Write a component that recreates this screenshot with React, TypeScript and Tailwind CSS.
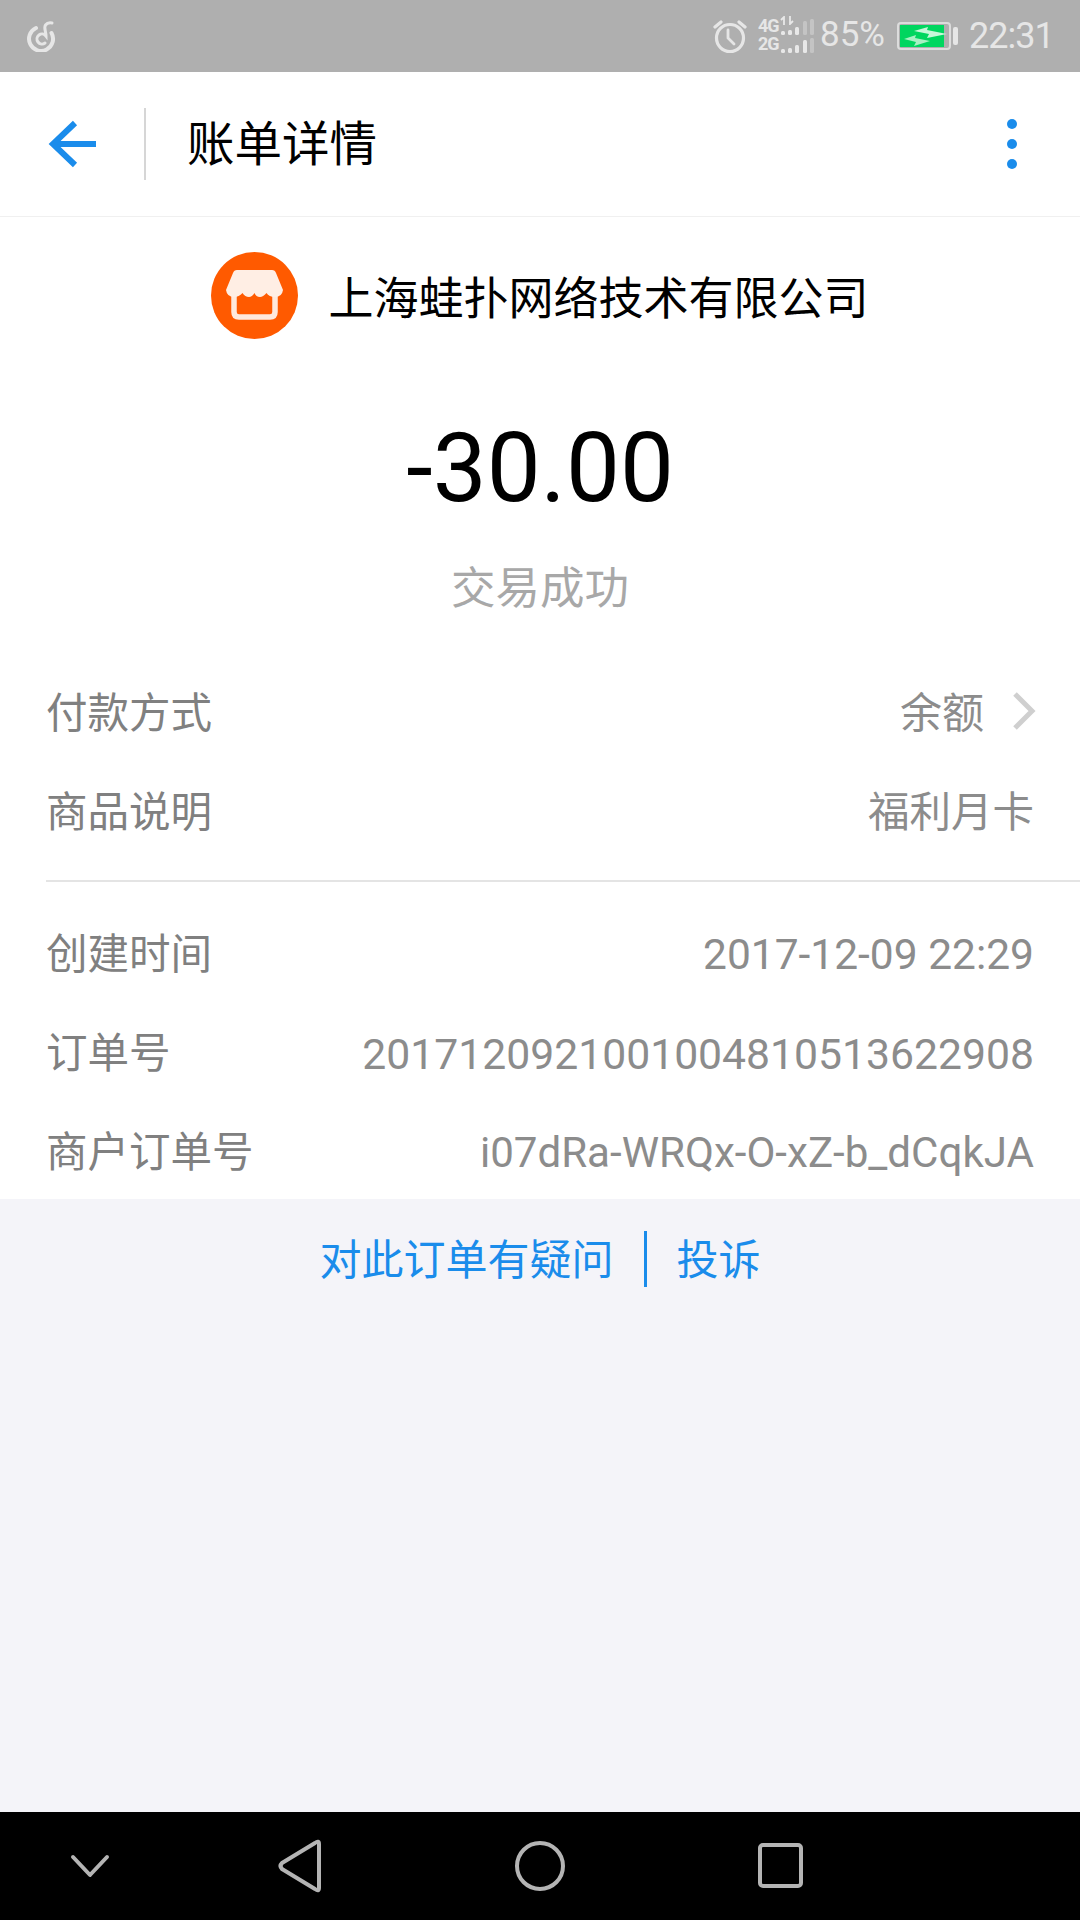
const cjk = "font-['Roboto','Noto_Sans_CJK_SC',sans-serif]";

function Bars({ heights, lit }: { heights: number[]; lit: number }) {
  return (
    <div className="flex items-end gap-[3.300px] h-[16px]">
      {heights.map((h, i) => (
        <div key={i} className={`w-[4px] rounded-[1.500px] ${i < lit ? "bg-[#e8e8e8]" : "bg-[#c4c4c4]"}`} style={{ height: h }} />
      ))}
    </div>
  );
}

function StatusBar() {
  return (
    <div className="h-[72px] bg-[#afafaf] flex items-center justify-between pl-[26px] pr-[27px] text-[#e6e6e6]">
      <svg width="30" height="32" viewBox="0 0 30 32" fill="none" stroke="#e6e6e6" strokeWidth="4" strokeLinecap="round">
        <path d="M10 8 A12 12 0 1 0 25.500 13" />
        <path d="M19 23 A5 5 0 1 1 20 16 C20 11 17.500 8 19.500 5 C21 3 23.500 2.500 26 3" strokeWidth="3" />
      </svg>
      <div className="flex items-center">
        <svg width="34" height="36" viewBox="0 0 34 36" fill="none" stroke="#e6e6e6" strokeWidth="3.200" strokeLinecap="round">
          <circle cx="17" cy="20" r="13.500" />
          <path d="M15 12 V20 L21 26" strokeWidth="2.800" />
          <path d="M2 9 L8 4 M32 9 L26 4" />
        </svg>
        <div className="flex flex-col w-[56px] ml-[11px] -mt-[3px]">
          <div className="flex items-end h-[18px] relative">
            <span className="font-['Roboto',sans-serif] font-bold text-[18px] leading-[18px] w-[23px] tracking-[-1px]">4G</span>
            <Bars heights={[4, 5, 8, 14, 16]} lit={3} />
            <svg width="16" height="9" viewBox="0 0 16 9" fill="none" stroke="#e8e8e8" strokeWidth="1.800" className="absolute left-[22px] -top-[1px]">
              <path d="M4 9 V1 L1 4 M10 0 V8 L13 5" />
            </svg>
          </div>
          <div className="flex items-end h-[18px]">
            <span className="font-['Roboto',sans-serif] font-bold text-[18px] leading-[18px] w-[23px] tracking-[-1px]">2G</span>
            <Bars heights={[4, 5, 8, 13, 15]} lit={4} />
          </div>
        </div>
        <span className="font-['Roboto',sans-serif] text-[35px] leading-[40px] w-[65px] ml-[6px] -mt-[3px] whitespace-nowrap">85%</span>
        <div className="ml-[12px] flex items-center -mt-[1px]">
          <div className="w-[54px] h-[28px] border-[2px] border-[#dcdcdc] rounded-[4px] pl-[1px] py-[1px]">
            <div className="w-[44px] h-full bg-[#00d65f] flex items-center justify-center">
              <svg width="44" height="20" viewBox="0 0 44 20" fill="#a8f0c4" className="overflow-visible">
                <path d="M4 13 L16 9 L15 12 L30 15 L14 20 L16 16 Z" />
                <path d="M14 5 L28 1 L27 4 L47 8 L27 12 L29 8 Z" fill="#c8f7da" />
              </svg>
            </div>
          </div>
          <div className="w-[5px] h-[18px] ml-[2px] rounded-[2px] bg-[#e6e6e6]" />
        </div>
        <span className="font-['Roboto',sans-serif] text-[36px] leading-[40px] w-[84px] ml-[11px] tracking-[-1px] whitespace-nowrap -mt-[1px]">22:31</span>
      </div>
    </div>
  );
}

function Header() {
  return (
    <div className="h-[145px] bg-white border-b border-[#f0f0f0] flex items-center justify-between">
      <div className="flex items-center">
        <svg width="50" height="48" viewBox="0 0 50 48" fill="none" stroke="#1a8ceb" strokeWidth="6" className="ml-[48px]">
          <path d="M48 24 H5" />
          <path d="M27 3 L5 24 L27 45" />
        </svg>
        <div className="w-[2px] h-[72px] bg-[#d6d6d6] ml-[46px]" />
        <span className={`${cjk} text-[47.500px] leading-[60px] text-black ml-[41px] mt-[1px]`}>账单详情</span>
      </div>
      <div className="flex flex-col gap-[10px] mr-[63px]">
        <div className="w-[10px] h-[10px] rounded-full bg-[#1a8ceb]" />
        <div className="w-[10px] h-[10px] rounded-full bg-[#1a8ceb]" />
        <div className="w-[10px] h-[10px] rounded-full bg-[#1a8ceb]" />
      </div>
    </div>
  );
}

function Row({ label, value, size, chevron }: { label: string; value: string; size: string; chevron?: boolean }) {
  return (
    <div className="h-[99px] flex items-center justify-between pl-[46px] pr-[46px]">
      <span className={`${cjk} text-[41.500px] leading-[50px] text-[#808080]`}>{label}</span>
      <div className="flex items-center">
        <span className={`${cjk} ${size} leading-[50px] text-[#8c8c8c]`}>{value}</span>
        {chevron && (
          <svg width="24" height="40" viewBox="0 0 24 40" fill="none" stroke="#cfcfcf" strokeWidth="5" className="ml-[28px] -mr-[2px] -mt-[5px]">
            <path d="M3 3 L20 20 L3 37" />
          </svg>
        )}
      </div>
    </div>
  );
}

function NavBar() {
  return (
    <div className="h-[108px] bg-black flex items-center">
      <svg width="1080" height="108" viewBox="0 0 1080 108" fill="none" stroke="#b4b4b4" strokeWidth="4" strokeLinejoin="round" strokeLinecap="round">
        <path d="M73 45 L90 63 L107 45" />
        <path d="M319 32 V76 Q319 80 315 77 L282 57 Q279 54 282 51 L315 31 Q319 28 319 32 Z" />
        <circle cx="540" cy="54" r="23" />
        <rect x="760" y="33" width="41" height="41" rx="3" />
      </svg>
    </div>
  );
}

export default function App() {
  return (
    <div className="w-[1080px] h-[1920px] flex flex-col bg-[#f4f4f9] overflow-hidden">
      <StatusBar />
      <Header />
      <div className="bg-white h-[982px]">
        <div className="flex items-center justify-center mt-[35px] h-[87px]">
          <svg width="87" height="87" viewBox="0 0 87 87" className="shrink-0">
            <circle cx="43.500" cy="43.500" r="43.500" fill="#ff5a00" />
            <path d="M23 36 V60 Q23 65 28 65 H59 Q64 65 64 60 V36" fill="none" stroke="#ffe9dc" strokeWidth="5.500" />
            <path d="M26 18 H61 Q64 18 65 21 L72 38 Q71 45 64 45 Q58 45 55.500 41 Q52 45 49 45 Q45 45 43.500 41 Q41 45 38 45 Q34 45 31.500 41 Q28 45 23 45 Q16 45 15 38 L22 21 Q23 18 26 18 Z" fill="#ffeee4" />
          </svg>
          <span className={`${cjk} text-[45px] leading-[60px] text-black ml-[30px] mt-[8px] whitespace-nowrap`}>上海蛙扑网络技术有限公司</span>
        </div>
        <div className="flex justify-center mt-[69px] h-[120px] items-center">
          <span className="font-['Roboto',sans-serif] text-[96px] leading-[110px] text-black">-30.00</span>
        </div>
        <div className={`${cjk} text-center text-[44.500px] leading-[60px] text-[#a8a8a8] mt-[31px]`}>交易成功</div>
        <div className="mt-[45px]">
          <Row label="付款方式" value="余额" size="text-[42px]" chevron />
          <Row label="商品说明" value="福利月卡" size="text-[41.500px]" />
        </div>
        <div className="ml-[46px] h-[2px] bg-[#e4e4e4] mt-[18px] mb-[23px]" />
        <Row label="创建时间" value="2017-12-09 22:29" size="text-[42.500px]" />
        <Row label="订单号" value="2017120921001004810513622908" size="text-[42.700px]" />
        <Row label="商户订单号" value="i07dRa-WRQx-O-xZ-b_dCqkJA" size="text-[42.100px]" />
      </div>
      <div className="flex-1 flex justify-center">
        <div className="flex items-center h-[60px] mt-[30px]">
          <span className={`${cjk} text-[42px] leading-[50px] text-[#1a8ceb] mt-[4px]`}>对此订单有疑问</span>
          <div className="w-[3px] h-[56px] bg-[#1a8ceb] mx-[30px]" />
          <span className={`${cjk} text-[42px] leading-[50px] text-[#1a8ceb] mt-[4px]`}>投诉</span>
        </div>
      </div>
      <NavBar />
    </div>
  );
}
